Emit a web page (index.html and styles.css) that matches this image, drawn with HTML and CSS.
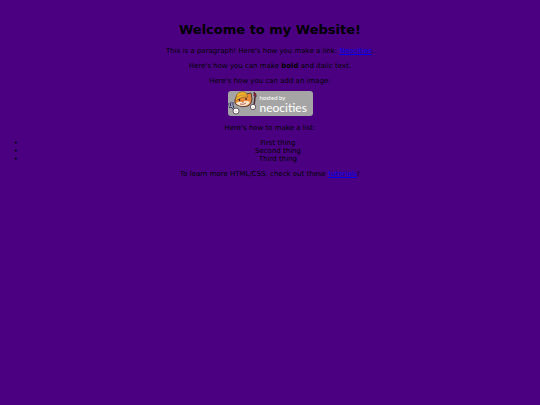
FILE: index.html
```html
<!DOCTYPE html>
<html lang="en">
<head>
    <meta charset="UTF-8">
    <meta name="viewport" content="width=device-width, initial-scale=1.0">
    <title>The web site of my dreams</title>
    <link rel="stylesheet" href="styles.css">
</head>

<body>
    <h1>Welcome to my Website!</h1>

    <p>This is a paragraph! Here's how you make a link: <a href="#neocities">Neocities</a>.</p>

    <p>Here's how you can make <strong>bold</strong> and <em>italic</em> text.</p>

    <p>Here's how you can add an image:</p>

    <div class="badge">
        <!-- cat with a fork and a paintbrush -->
        <svg class="cat" viewBox="0 0 30 25" aria-hidden="true">
            <path d="M1 12 L2 16 L5 15 L5 11 M3 11 L4 16 L8 20" fill="none" stroke="#302b4c" stroke-width="2"/>
            <path d="M1 12 L2 16 L5 15 L5 11 M3 11 L4 16 L8 20" fill="none" stroke="#a0a8c4" stroke-width="1"/>
            <path d="M7 9 L9 4 L18 3 L23 2 L24 8 Q24 13 20 15 Q14 17 9 14 Q6 13 7 9 Z" fill="#e98a38" stroke="#392333" stroke-width="0.8"/>
            <path d="M8 7 Q8 2 13 1 Q18 0 19 4 L20 6 Q14 5 9 9 L7 9 Z" fill="#f3b832" stroke="#8a5a20" stroke-width="0.7"/>
            <path d="M9 6 Q13 3 18 4" fill="none" stroke="#b8742a" stroke-width="0.7"/>
            <path d="M8 12 Q11 10 14 11 Q18 9 22 11 Q20 15 15 15 Q10 15 8 12" fill="#fbe8d2"/>
            <path d="M11 8 L12 10 M18 7 L18 9" stroke="#291d29" stroke-width="1.2"/>
            <path d="M14 11 L16 11 M12 13 Q16 14 18 12" fill="none" stroke="#a33d35" stroke-width="0.8"/>
            <path d="M27 6 L26 15" stroke="#4c2634" stroke-width="1.5"/>
            <path d="M26 5 L26 1 L28 3 L28 6 Z" fill="#a82743" stroke="#4c2034" stroke-width="0.8"/>
            <circle cx="8" cy="20" r="3" fill="#fff" stroke="#493344" stroke-width="0.8"/>
            <circle cx="25" cy="16" r="2.7" fill="#fff" stroke="#493344" stroke-width="0.8"/>
            <path d="M7 20 L9 21 M24 16 L26 17" stroke="#d9a99b" stroke-width="0.7"/>
        </svg>
        <div class="badge-text">
            <span class="hosted">hosted by</span>
            <span class="brand">neocities</span>
        </div>
    </div>

    <p>Here's how to make a list:</p>

    <ul>
        <li>First thing</li>
        <li>Second thing</li>
        <li>Third thing</li>
    </ul>

    <p>To learn more HTML/CSS, check out these <a href="#tutorials">tutorials</a>!</p>
</body>
</html>
```
FILE: styles.css
```css
body {
    margin: 0;
    padding: 21px 4px 8px;
    background-color: #4b0082;
    color: black;
    font-family: Verdana, "DejaVu Sans", sans-serif;
    font-size: 7px;
    line-height: 8px;
    text-align: center;
}

h1 {
    margin: 0 0 9px;
    font-size: 13px;
    line-height: 17px;
}

p {
    margin: 7px 0;
}

a {
    color: #0000ee;
}

ul {
    margin: 7px 0;
    padding-left: 16px;
}

li::marker {
    content: "• ";
}

.badge {
    display: flex;
    width: 85px;
    height: 25px;
    margin: -1px auto 8px;
    background-color: #a5a5a5;
    border-radius: 3px;
    color: white;
}

.cat {
    flex: none;
    width: 30px;
    height: 25px;
}

.badge-text {
    display: flex;
    flex-direction: column;
    padding: 3px 0 0 2px;
    font-family: Lato, "Open Sans", sans-serif;
    text-align: left;
}

.hosted {
    font-size: 6px;
    line-height: 8px;
}

.brand {
    font-size: 12px;
    line-height: 12px;
}
```
